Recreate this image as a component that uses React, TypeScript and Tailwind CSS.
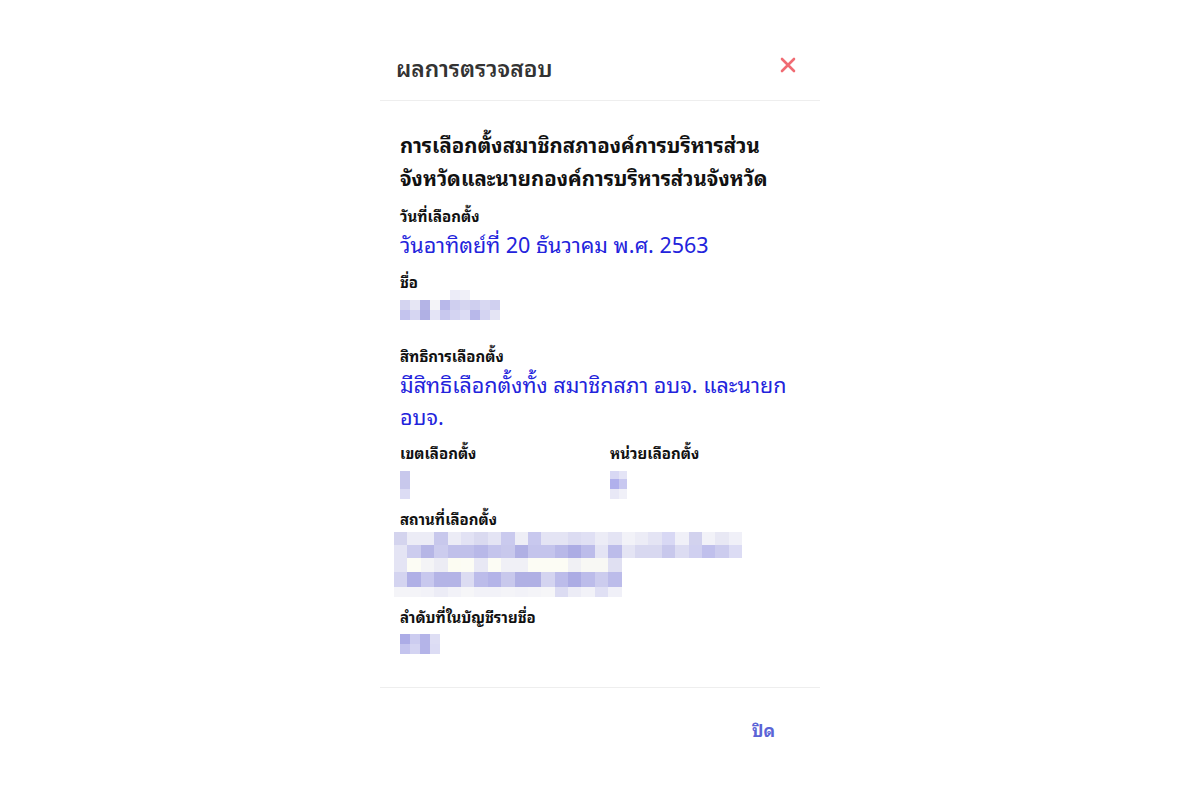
import React from "react";

type Row = { h: number; colors: string[] };

function Mosaic({ rows, cw, className = "" }: { rows: Row[]; cw: number; className?: string }) {
  return (
    <div className={`flex flex-col ${className}`}>
      {rows.map((r, i) => (
        <div key={i} className="flex">
          {r.colors.map((c, j) => (
            <div key={j} style={{ width: cw, height: r.h, background: c }} />
          ))}
        </div>
      ))}
    </div>
  );
}

const T = "transparent";

const nameRows: Row[] = [
  { h: 10, colors: [T, T, T, T, T, "#ececf8", "#f0f0f8", T, T, T] },
  { h: 10, colors: ["#d4d4f0", "#e6e6f4", "#b4b4e6", "#f4f4f8", "#b8b8ea", "#cfcfef", "#d5d5f0", "#cfcfef", "#d8d8f2", "#d0d0f0"] },
  { h: 10, colors: ["#c4c4ee", "#d6d6f2", "#b0b0e4", "#e4e4f6", "#c8c8ee", "#d4d4f2", "#dcdcf4", "#b8b8ea", "#d4d4f2", "#e4e4f4"] },
];

const placeRows: Row[] = [
  { h: 13, colors: ["#d4d4ee", "#ececf6", "#ececf6", "#c8c8ec", "#ececf6", "#e2e2f4", "#dadaf0", "#e4e4f4", "#cacaee", "#eeeef6", "#c8c8ee", "#e4e4f4", "#e4e4f4", "#dcdcf2", "#e0e0f4", "#ececf6", "#e4e4f4", "#f2f2f8", "#ececf6", "#e4e4f4", "#d8d8f4", "#f0f0f8", "#d2d2ee", "#f2f2f8", "#e8e8f4", "#f0f0f8"] },
  { h: 13, colors: ["#e4e4f4", "#ccccee", "#b6b6e6", "#ccccee", "#c0c0ea", "#c0c0ea", "#b8b8e8", "#c4c4ec", "#c8c8ec", "#b0b0e4", "#c4c4ec", "#c4c4ec", "#b8b8e8", "#acace4", "#bcbcea", "#e4e4f4", "#bcbcea", "#e4e4f4", "#d8d8f0", "#d8d8f0", "#c8c8ec", "#dcdcf2", "#d0d0f0", "#c0c0ec", "#ccccee", "#dcdcf4"] },
  { h: 14, colors: ["#e4e4f4", "#fcfcf4", "#f4f4f6", "#ececf4", "#fcfcf2", "#fcfcf4", "#e8e8f4", "#fcfcf4", "#f0f0f6", "#f0f0f6", "#fcfcf4", "#fcfcf4", "#fcfcf4", "#f0f0f4", "#f8f8f4", "#f8f8f4", "#e0e0f2"] },
  { h: 15, colors: ["#d4d4f0", "#b0b0e6", "#c8c8ee", "#b4b4e6", "#b4b4e6", "#dcdcf2", "#bcbcea", "#b4b4e8", "#c8c8ec", "#b0b0e4", "#b0b0e4", "#d4d4f0", "#bcbcea", "#acace4", "#bcbcea", "#ccccee", "#bcbcea"] },
  { h: 10, colors: ["#f4f4f8", "#f4f4f8", "#f2f2f8", "#ececf6", "#f2f2f8", "#f6f6f8", "#f2f2f8", "#f2f2f8", "#f4f4f8", "#f2f2f8", "#f4f4f8", "#f6f6f8", "#dcdcf2", "#ececf6", "#f2f2f8", "#e0e0f4", "#f0f0f8"] },
];

const districtRows: Row[] = [
  { h: 18, colors: ["#c8c8ec"] },
  { h: 10, colors: ["#dcdcf4"] },
];

const unitRows: Row[] = [
  { h: 8, colors: ["#d8d8f4", "#e4e4f6"] },
  { h: 10, colors: ["#b0b0ec", "#c8c8f0"] },
  { h: 10, colors: ["#e8e8f6", "#f0f0f8"] },
];

const orderRows: Row[] = [
  { h: 10, colors: ["#acace6", "#ccccf0", "#b4b4e8", "#dedef4"] },
  { h: 10, colors: ["#c4c4ee", "#d4d4f2", "#b4b4e8", "#dcdcf4"] },
];

const font = { fontFamily: 'Tahoma, "Noto Sans Thai Looped", "Noto Sans Thai", "Noto Sans Thai UI", Loma, "Garuda", "DejaVu Sans", sans-serif' };

function Label({ children, className = "" }: { children: React.ReactNode; className?: string }) {
  return <div className={`text-[15px] leading-[20px] font-bold text-[#111] ${className}`}>{children}</div>;
}

export default function App() {
  return (
    <div className="min-h-[800px] w-full bg-white" style={font}>
      <div className="mx-auto w-[440px] pt-[36px] bg-white">
        <div className="h-[65px] flex items-center justify-between pl-4 pr-[24px] border-b border-[#eeeeee]">
          <div className="text-[22.8px] text-[#333] font-semibold -mt-[2px]">ผลการตรวจสอบ</div>
          <svg width="16" height="16" viewBox="0 0 16 16" className="mt-[-6px]">
            <path d="M2 2 L14 14 M14 2 L2 14" stroke="#f06b73" strokeWidth="2.6" strokeLinecap="round" />
          </svg>
        </div>
        <div className="px-5 pt-[27px] pb-[33px] border-b border-[#eeeeee]">
          <div className="text-[20.4px] leading-[33px] font-bold text-[#111]">
            การเลือกตั้งสมาชิกสภาองค์การบริหารส่วนจังหวัดและนายกองค์การบริหารส่วนจังหวัด
          </div>
          <Label className="mt-[11px]">วันที่เลือกตั้ง</Label>
          <div className="mt-[3px] text-[21.5px] leading-[32px] text-[#2323dc]">วันอาทิตย์ที่ 20 ธันวาคม พ.ศ. 2563</div>
          <Label className="mt-[11px]">ชื่อ</Label>
          <Mosaic rows={nameRows} cw={10} className="-mt-[1px]" />
          <Label className="mt-[25px]">สิทธิการเลือกตั้ง</Label>
          <div className="mt-[3px] text-[21.5px] leading-[32px] text-[#2323dc]">
            มีสิทธิเลือกตั้งทั้ง สมาชิกสภา อบจ. และนายก อบจ.
          </div>
          <div className="mt-[10px] grid grid-cols-2">
            <div>
              <Label>เขตเลือกตั้ง</Label>
              <Mosaic rows={districtRows} cw={10} className="mt-[9px]" />
            </div>
            <div className="pl-[10px]">
              <Label>หน่วยเลือกตั้ง</Label>
              <Mosaic rows={unitRows} cw={8.5} className="mt-[9px]" />
            </div>
          </div>
          <Label className="mt-[9px]">สถานที่เลือกตั้ง</Label>
          <Mosaic rows={placeRows} cw={13.4} className="mt-[4px] -ml-[6px]" />
          <Label className="mt-[9px]">ลำดับที่ในบัญชีรายชื่อ</Label>
          <Mosaic rows={orderRows} cw={10} className="mt-[8px]" />
        </div>
        <div className="h-[84px] flex items-center justify-end pr-[45px]">
          <div className="text-[17px] font-bold text-[#5b64d6]">ปิด</div>
        </div>
      </div>
    </div>
  );
}
